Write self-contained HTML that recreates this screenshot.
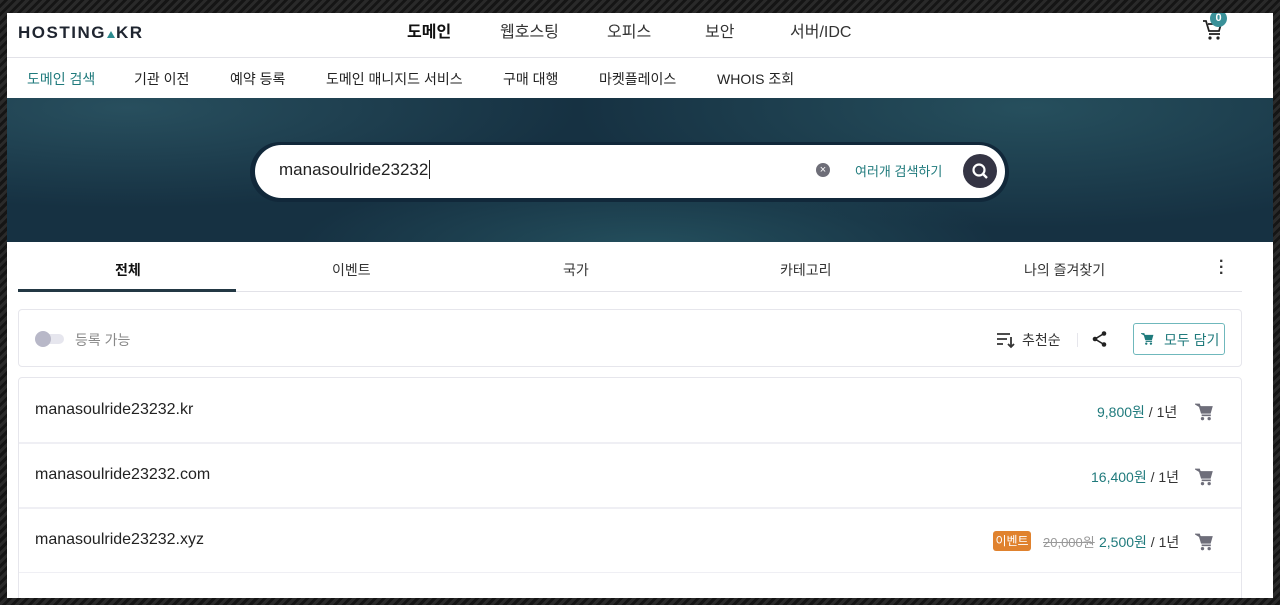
<!DOCTYPE html>
<html><head><meta charset="utf-8"><style>
*{margin:0;padding:0;box-sizing:border-box}
body{width:1280px;height:605px;overflow:hidden;background:#222 repeating-linear-gradient(135deg,#2a2a2a 0 3px,#151515 3px 6px);font-family:"Liberation Sans","Noto Sans CJK KR",sans-serif;color:#222;position:relative}
.page{position:absolute;left:7px;top:13px;width:1266px;height:585px;background:#fff;overflow:hidden}
.abs{position:absolute;white-space:nowrap}
.hdr{height:45px;border-bottom:1px solid #e2e2e8}
.logo{left:11px;top:10px;font-size:17px;font-weight:bold;letter-spacing:1.5px;color:#1f2530}
.logo i{display:inline-block;width:0;height:0;border-left:4px solid transparent;border-right:4px solid transparent;border-bottom:7px solid #2b8a8e;margin:0 1px}
.top{top:5px;font-size:16px;color:#333}
.sub{top:56px;font-size:14px;color:#222}
.banner{left:0;top:85px;width:1266px;height:144px;background:radial-gradient(ellipse 450px 100px at 120px 10px,#284f5e,transparent),radial-gradient(ellipse 450px 120px at 1020px 10px,#264f5d,transparent),radial-gradient(ellipse 350px 80px at 640px 150px,#244f5d,transparent),#163142}
.search{left:243px;top:44px;width:759px;height:60px;border-radius:30px;background:#11283a}
.pill{left:248px;top:47px;width:750px;height:53px;border-radius:27px;background:#fff}
.tab{top:247px;font-size:14px;color:#333}
.card{left:11px;width:1224px;border:1px solid #e6e6ec;border-radius:4px}
.dom{left:28px;font-size:16px;color:#222}
.price{font-size:14px;color:#1f7a7c}
.yr{font-size:14px;color:#333}
</style></head><body>
<div class="page">
<div class="hdr"></div>
<div class="abs logo">HOSTING<i></i>KR</div>
<div class="abs top" style="left:400px;font-weight:bold;color:#111">도메인</div>
<div class="abs top" style="left:493px">웹호스팅</div>
<div class="abs top" style="left:600px">오피스</div>
<div class="abs top" style="left:698px">보안</div>
<div class="abs top" style="left:783px">서버/IDC</div>
<svg class="abs" style="left:1194px;top:5px" width="24" height="24" viewBox="0 0 24 24"><path d="M2 3h3l3 10h10l2-7H7" fill="none" stroke="#222" stroke-width="1.8"/><path d="M8 16h11" stroke="#222" stroke-width="1.8"/><circle cx="9" cy="20" r="1.6" fill="#222"/><circle cx="17" cy="20" r="1.6" fill="#222"/></svg>
<div class="abs" style="left:1203px;top:-3px;width:17px;height:17px;border-radius:50%;background:#3a9199;color:#fff;font-size:11px;font-weight:bold;text-align:center;line-height:17px">0</div>
<div class="abs sub" style="left:20px;color:#1f7a7c">도메인 검색</div>
<div class="abs sub" style="left:127px">기관 이전</div>
<div class="abs sub" style="left:223px">예약 등록</div>
<div class="abs sub" style="left:319px">도메인 매니지드 서비스</div>
<div class="abs sub" style="left:496px">구매 대행</div>
<div class="abs sub" style="left:592px">마켓플레이스</div>
<div class="abs sub" style="left:710px">WHOIS 조회</div>
<div class="abs banner">
 <div class="abs search"></div>
 <div class="abs pill"></div>
 <div class="abs" style="left:272px;top:62px;font-size:17px;color:#222">manasoulride23232<span style="border-left:1px solid #222;margin-left:1px"></span></div>
 <div class="abs" style="left:809px;top:65px;width:14px;height:14px;border-radius:50%;background:#6e6e78;color:#fff;font-size:11px;text-align:center;line-height:14px">×</div>
 <div class="abs" style="left:848px;top:63px;font-size:13px;color:#1f7a7c">여러개 검색하기</div>
 <div class="abs" style="left:956px;top:56px;width:34px;height:34px;border-radius:50%;background:#343444"></div>
 <svg class="abs" style="left:963px;top:63px" width="20" height="20" viewBox="0 0 20 20"><circle cx="9" cy="9" r="5.5" fill="none" stroke="#fff" stroke-width="2.2"/><path d="M13 13l4 4" stroke="#fff" stroke-width="2.4"/></svg>
</div>
<div class="abs" style="left:11px;top:278px;width:1224px;height:1px;background:#e2e2e8"></div>
<div class="abs" style="left:11px;top:276px;width:218px;height:3px;background:#233844"></div>
<div class="abs tab" style="left:108px;font-weight:bold;color:#111">전체</div>
<div class="abs tab" style="left:325px">이벤트</div>
<div class="abs tab" style="left:556px">국가</div>
<div class="abs tab" style="left:773px">카테고리</div>
<div class="abs tab" style="left:1017px">나의 즐겨찾기</div>
<div class="abs" style="left:1212px;top:246px;font-size:16px;line-height:6px;color:#333;font-weight:bold">·<br>·<br>·</div>
<div class="abs card" style="top:296px;height:58px"></div>
<div class="abs" style="left:28px;top:321px;width:29px;height:10px;border-radius:5px;background:#e6e6ee"></div>
<div class="abs" style="left:28px;top:318px;width:16px;height:16px;border-radius:50%;background:#b8b8c8"></div>
<div class="abs" style="left:68px;top:317px;font-size:14px;color:#888">등록 가능</div>
<svg class="abs" style="left:989px;top:318px" width="20" height="18" viewBox="0 0 20 18"><path d="M1 3h13M1 8h10M1 13h6" stroke="#333" stroke-width="1.8"/><path d="M15 6v10M12 13l3 3 3-3" fill="none" stroke="#333" stroke-width="1.8"/></svg>
<div class="abs" style="left:1015px;top:317px;font-size:14px;color:#333">추천순</div>
<div class="abs" style="left:1070px;top:320px;width:1px;height:14px;background:#e6e6ec"></div>
<svg class="abs" style="left:1084px;top:317px" width="18" height="18" viewBox="0 0 18 18"><circle cx="13" cy="3.5" r="2.3" fill="#222"/><circle cx="4" cy="9" r="2.3" fill="#222"/><circle cx="13" cy="14.5" r="2.3" fill="#222"/><path d="M13 3.5L4 9l9 5.5" fill="none" stroke="#222" stroke-width="1.6"/></svg>
<div class="abs" style="left:1126px;top:310px;width:92px;height:32px;border:1px solid #6fb8bc;border-radius:3px"></div>
<svg class="abs" style="left:1134px;top:319px" width="14" height="14" viewBox="0 0 24 24"><path d="M2 3h3l3 10h10l2-7H7z" fill="#1f7a7c" stroke="#1f7a7c" stroke-width="2"/><path d="M8 16h11" stroke="#1f7a7c" stroke-width="2"/><circle cx="9" cy="20" r="2" fill="#1f7a7c"/><circle cx="17" cy="20" r="2" fill="#1f7a7c"/></svg>
<div class="abs" style="left:1157px;top:317px;font-size:14px;color:#1f7a7c">모두 담기</div>
<div class="abs card" style="top:364px;height:240px"></div>
<div class="abs" style="left:12px;top:429px;width:1222px;height:2px;background:#efeff4"></div>
<div class="abs" style="left:12px;top:494px;width:1222px;height:2px;background:#efeff4"></div>
<div class="abs" style="left:12px;top:559px;width:1222px;height:1px;background:#efeff4"></div>
<div class="abs dom" style="top:388px">manasoulride23232.kr</div>
<div class="abs dom" style="top:453px">manasoulride23232.com</div>
<div class="abs dom" style="top:518px">manasoulride23232.xyz</div>
<div class="abs" style="left:1090px;top:389px"><span class="price">9,800원</span><span class="yr"> / 1년</span></div>
<div class="abs" style="left:1084px;top:454px"><span class="price">16,400원</span><span class="yr"> / 1년</span></div>
<div class="abs" style="left:986px;top:518px;width:38px;height:20px;border-radius:3px;background:#e0822e;color:#fff;font-size:12px;text-align:center;line-height:20px">이벤트</div>
<div class="abs" style="left:1036px;top:519px;font-size:13px;color:#999;text-decoration:line-through">20,000원</div>
<div class="abs" style="left:1092px;top:519px"><span class="price">2,500원</span><span class="yr"> / 1년</span></div>
<svg class="abs" style="left:1188px;top:389px" width="20" height="20" viewBox="0 0 24 24"><path d="M2 3h3l3 10h10l2-7H7z" fill="#6e6e7a" stroke="#6e6e7a" stroke-width="2"/><path d="M8 16h11" stroke="#6e6e7a" stroke-width="2"/><circle cx="9" cy="20" r="2" fill="#6e6e7a"/><circle cx="17" cy="20" r="2" fill="#6e6e7a"/></svg>
<svg class="abs" style="left:1188px;top:454px" width="20" height="20" viewBox="0 0 24 24"><path d="M2 3h3l3 10h10l2-7H7z" fill="#6e6e7a" stroke="#6e6e7a" stroke-width="2"/><path d="M8 16h11" stroke="#6e6e7a" stroke-width="2"/><circle cx="9" cy="20" r="2" fill="#6e6e7a"/><circle cx="17" cy="20" r="2" fill="#6e6e7a"/></svg>
<svg class="abs" style="left:1188px;top:519px" width="20" height="20" viewBox="0 0 24 24"><path d="M2 3h3l3 10h10l2-7H7z" fill="#6e6e7a" stroke="#6e6e7a" stroke-width="2"/><path d="M8 16h11" stroke="#6e6e7a" stroke-width="2"/><circle cx="9" cy="20" r="2" fill="#6e6e7a"/><circle cx="17" cy="20" r="2" fill="#6e6e7a"/></svg>
</div>
</body></html>
